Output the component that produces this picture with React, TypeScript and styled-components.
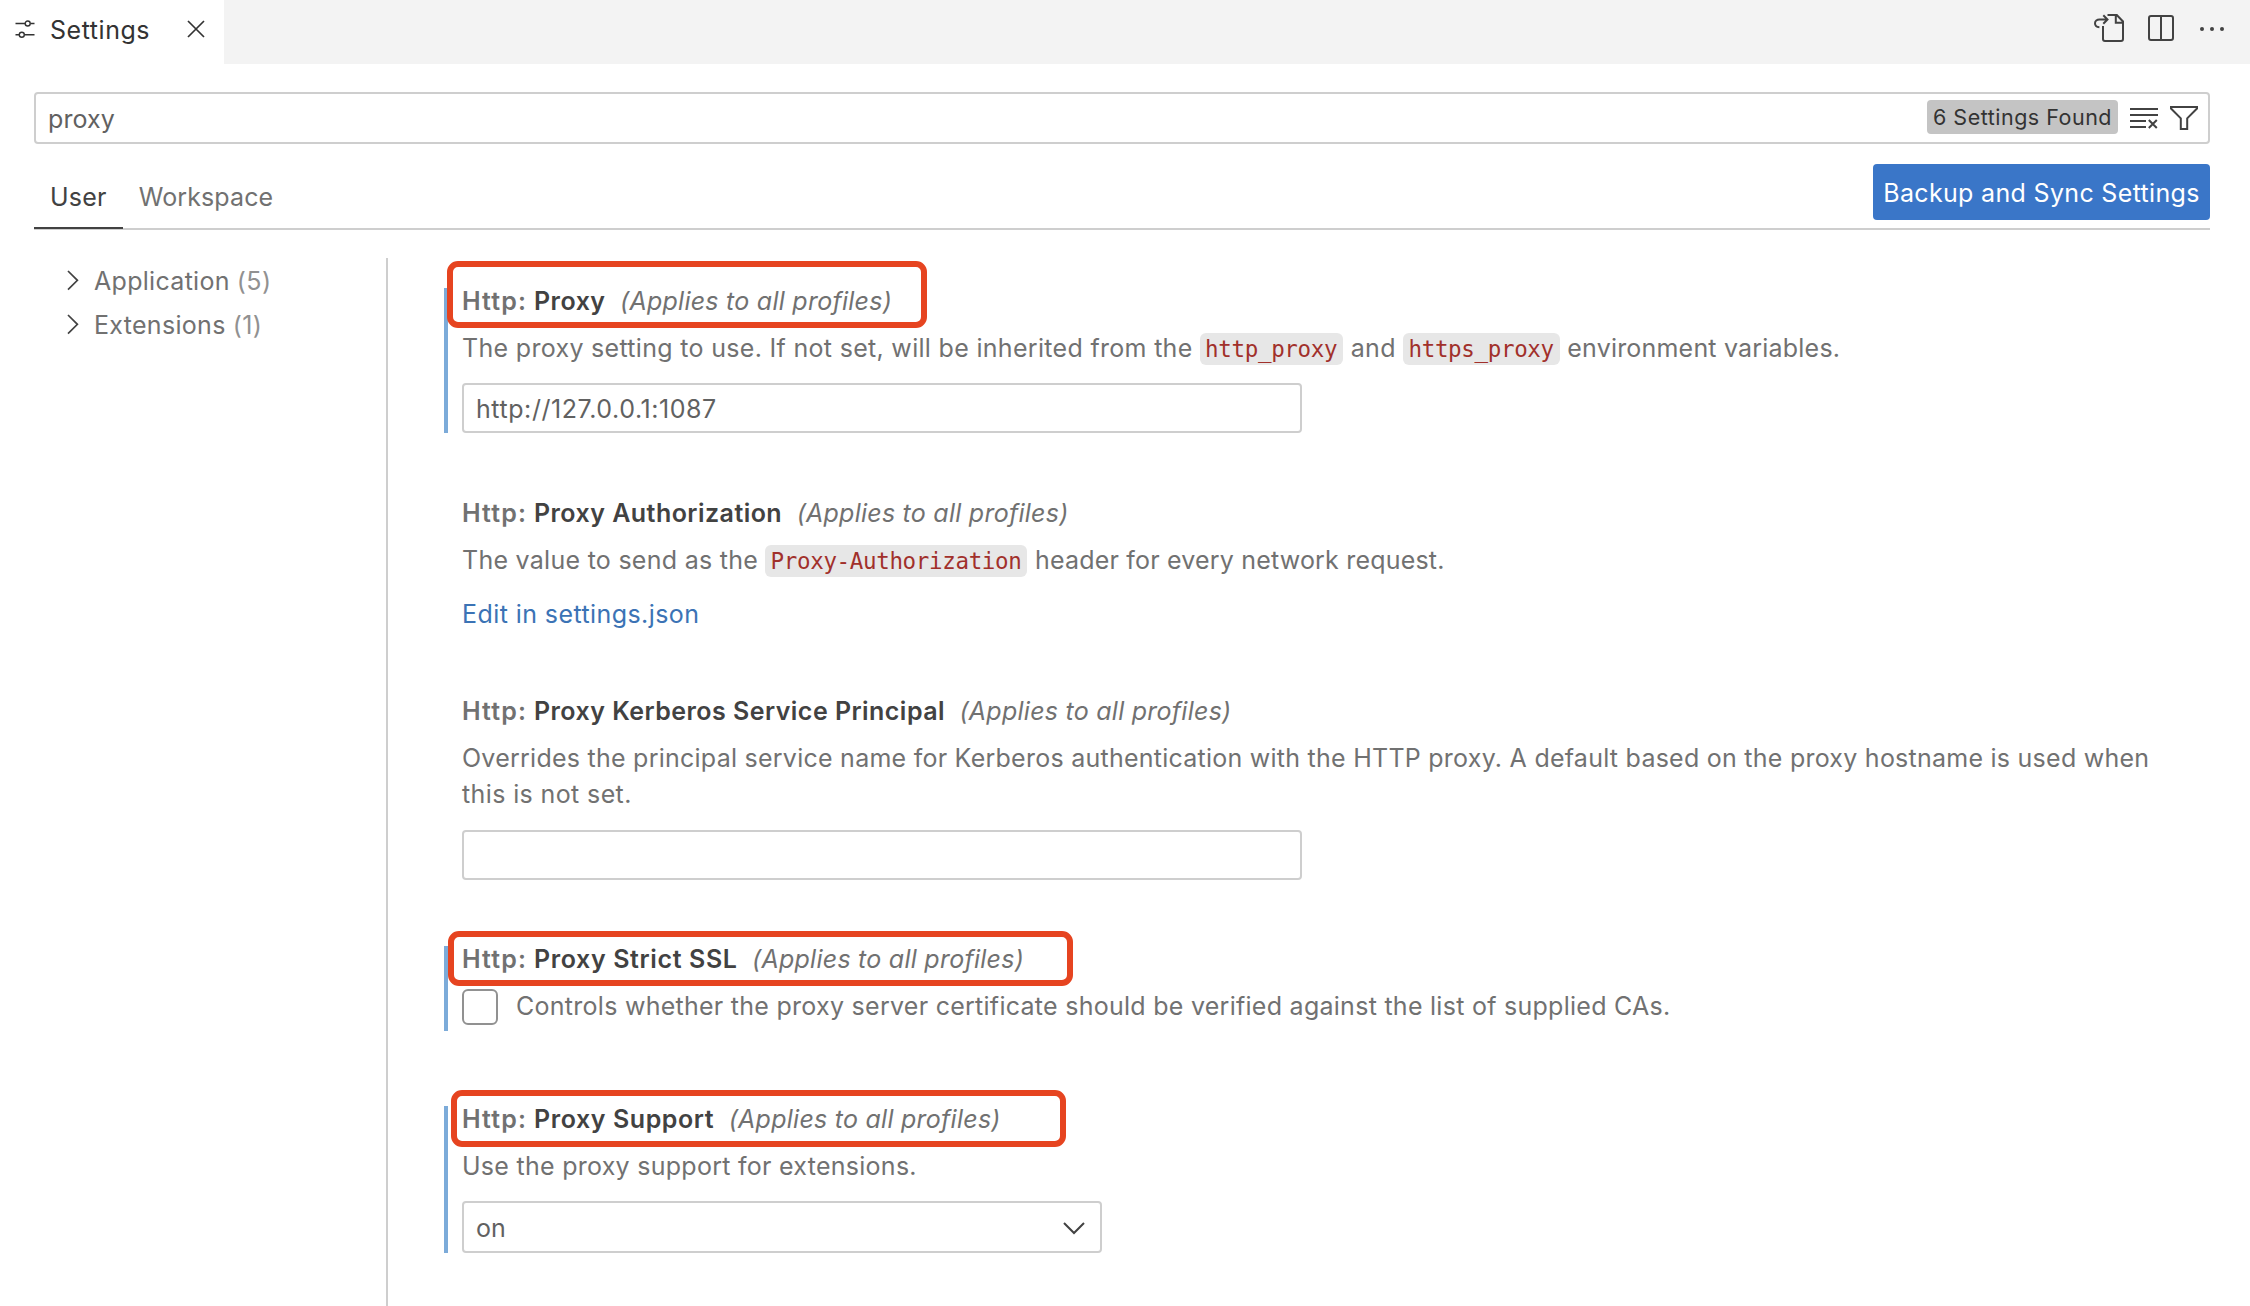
import React from "react";
import styled, { createGlobalStyle } from "styled-components";

const GlobalStyle = createGlobalStyle`
  *, *::before, *::after { box-sizing: border-box; }
  body {
    margin: 0;
    background: #fff;
    font-family: Inter, "Liberation Sans", sans-serif;
    font-size: 25px;
    color: #717171;
  }
`;

const Window = styled.div`
  width: 2250px;
  height: 1306px;
  display: flex;
  flex-direction: column;
  overflow: hidden;
  background: #fff;
`;

const TabBar = styled.header`
  height: 64px;
  flex: none;
  display: flex;
  justify-content: space-between;
  background: #f3f3f3;
`;

const EditorTab = styled.div`
  width: 224px;
  height: 64px;
  padding: 0 19px 6px 15px;
  display: flex;
  align-items: center;
  background: #fff;
  color: #333;
`;

const TabLabel = styled.span`
  margin-left: 15px;
  padding-top: 2px;
  flex: 1;
  letter-spacing: 0.55px;
`;

const EditorActions = styled.div`
  display: flex;
  align-items: center;
  gap: 24px;
  padding: 0 25px 8px 0;

  svg:nth-child(2) {
    margin-right: 1px;
  }
`;

const Spaced = styled.span<{ $ls: number }>`
  letter-spacing: ${(p) => p.$ls}px;
  white-space: nowrap;
`;

const Header = styled.div`
  flex: none;
  padding: 28px 40px 0 34px;
`;

const SearchBox = styled.div`
  height: 52px;
  border: 2px solid #cecece;
  border-radius: 4px;
  display: flex;
  align-items: center;
  gap: 12px;
  padding: 0 10px 0 12px;
  color: #616161;
`;

const SearchText = styled.span`
  flex: 1;
  padding-top: 2px;
  letter-spacing: 0.1px;
`;

const Badge = styled.span`
  width: 191px;
  height: 34px;
  margin-bottom: 2px;
  border-radius: 4px;
  background: #c4c4c4;
  color: #333;
  font-size: 21.5px;
  line-height: 34px;
  letter-spacing: 0.5px;
  text-align: center;
`;

const ScopeBar = styled.div`
  height: 86px;
  display: flex;
  justify-content: space-between;
  border-bottom: 2px solid #cecece;
`;

const ScopeTabs = styled.nav`
  display: flex;
`;

const ScopeTab = styled.div<{ $active?: boolean }>`
  height: 85px;
  padding: 37px 16px 0;
  line-height: 32px;
  letter-spacing: ${(p) => (p.$active ? 0.25 : 0.1)}px;
  color: ${(p) => (p.$active ? "#424242" : "#717171")};
  border-bottom: ${(p) => (p.$active ? "2px solid #424242" : "none")};
`;

const SyncButton = styled.button`
  width: 337px;
  height: 56px;
  margin-top: 20px;
  padding: 2px 0 0;
  border: 0;
  border-radius: 4px;
  background: #3a76c8;
  color: #fff;
  font: inherit;
  letter-spacing: 0.33px;
`;

const Body = styled.div`
  flex: 1;
  display: flex;
  padding-top: 28px;
  min-height: 0;
`;

const Tree = styled.aside`
  width: 388px;
  flex: none;
  border-right: 2px solid #cecece;
  padding: 1px 0 0 62px;
`;

const TreeRow = styled.div`
  height: 44px;
  display: flex;
  align-items: center;
  letter-spacing: 0.3px;
`;

const TreeLabel = styled.span`
  margin: 0 7px 0 10px;
`;

const Count = styled.span`
  color: #919191;
  letter-spacing: 0.4px;
`;

const List = styled.main`
  flex: 1;
  padding: 30px 0 0 56px;
`;

const Setting = styled.section<{ $height: number; $gap?: number; $modified?: boolean }>`
  height: ${(p) => p.$height}px;
  border-left: 4px solid ${(p) => (p.$modified ? "#7cabd9" : "transparent")};
  padding-left: 14px;
  margin-bottom: ${(p) => p.$gap ?? 67}px;
`;

const TitleRow = styled.div`
  position: relative;
  height: 25px;
  line-height: 27px;
  margin-bottom: 17px;
  white-space: nowrap;
`;

const Category = styled.span`
  font-weight: 600;
  color: #717171;
  letter-spacing: 1.1px;
`;

const Name = styled.span<{ $ls: number }>`
  font-weight: 600;
  color: #424242;
  margin-left: 7px;
  letter-spacing: ${(p) => p.$ls}px;
`;

const Scope = styled.span`
  font-style: italic;
  margin-left: 14.5px;
  letter-spacing: 0.25px;
`;

const Highlight = styled.div<{ $x: number; $y: number; $w: number; $h: number }>`
  position: absolute;
  left: ${(p) => p.$x}px;
  top: ${(p) => p.$y}px;
  width: ${(p) => p.$w}px;
  height: ${(p) => p.$h}px;
  border: 6px solid #e64420;
  border-radius: 11px;
`;

const Description = styled.div`
  line-height: 36px;
`;

const Line = styled.div`
  height: 36px;
  display: flex;
  align-items: center;
  white-space: nowrap;
`;

const Code = styled.code`
  margin: 2px 7.5px 0 7px;
  padding: 0 6px 0 5.5px;
  height: 32px;
  line-height: 33px;
  border-radius: 6px;
  background: #e7e7e7;
  color: #a1302b;
  font-family: "DejaVu Sans Mono", "Liberation Mono", monospace;
  font-size: 22.5px;
  letter-spacing: -0.34px;
`;

const Field = styled.div<{ $width: number; $height: number; $top?: number }>`
  width: ${(p) => p.$width}px;
  height: ${(p) => p.$height}px;
  margin-top: ${(p) => p.$top ?? 17}px;
  padding: 1px 15px 0 12px;
  border: 2px solid #cecece;
  border-radius: 4px;
  display: flex;
  align-items: center;
  justify-content: space-between;
  color: #616161;
`;

const JsonLink = styled.a`
  display: block;
  margin-top: 18px;
  line-height: 36px;
  letter-spacing: 0.42px;
  color: #3b73b5;
`;

const CheckRow = styled.div`
  display: flex;
  align-items: center;
  gap: 18px;
  height: 36px;
`;

const Checkbox = styled.span`
  width: 36px;
  height: 36px;
  margin-top: 2px;
  border: 2px solid #919191;
  border-radius: 6px;
`;

const SlidersIcon = () => (
  <svg width="20" height="18" viewBox="0 0 20 18" fill="none" stroke="#333" strokeWidth="1.4">
    <path d="M0.5 3.5H10M15.5 3.5H19.5M0.5 14.7H4M9.5 14.7H19.5" />
    <circle cx="12.7" cy="3.5" r="2.5" />
    <circle cx="6.8" cy="14.7" r="2.5" />
  </svg>
);

const CloseIcon = () => (
  <svg width="18" height="18" viewBox="0 0 18 18" stroke="#333" strokeWidth="1.7">
    <path d="M1 1L17 17M17 1L1 17" />
  </svg>
);

const OpenFileIcon = () => (
  <svg width="31" height="30" viewBox="0 0 31 30" fill="none" stroke="#424242" strokeWidth="2">
    <path d="M10 13V26Q10 28 12 28H28Q30 28 30 26V8.5L23.8 2H14.5M22.8 2V9.7H30" />
    <path d="M6.4 14.2C3.5 14 2 12.2 2 10.2C2 8 4 6.5 6.5 6.5H14.3M10.3 2.2L14.5 6.5L10.3 10.8" />
  </svg>
);

const SplitIcon = () => (
  <svg width="26" height="26" viewBox="0 0 26 26" fill="none" stroke="#424242" strokeWidth="2">
    <rect x="1" y="1" width="24" height="24" rx="2" />
    <path d="M13 1V25" />
  </svg>
);

const MoreIcon = () => (
  <svg width="26" height="8" viewBox="0 0 26 8" fill="#424242">
    <circle cx="3" cy="5" r="2" />
    <circle cx="13" cy="5" r="2" />
    <circle cx="23" cy="5" r="2" />
  </svg>
);

const ClearIcon = () => (
  <svg width="28" height="22" viewBox="0 0 28 22" fill="none" stroke="#424242" strokeWidth="2">
    <path d="M0 2H28M0 8H28M0 14H16M0 20H16" />
    <path d="M18.8 13L26.8 21M26.8 13L18.8 21" />
  </svg>
);

const FilterIcon = () => (
  <svg width="28" height="24" viewBox="0 0 28 24" fill="none" stroke="#424242" strokeWidth="2">
    <path d="M1 1H27V2.5L17.2 12.4V23H10.8V12.4L1 2.5Z" />
  </svg>
);

const ChevronRight = () => (
  <svg width="22" height="22" viewBox="0 0 22 22" fill="none" stroke="#424242" strokeWidth="1.7">
    <path d="M6 1L15.4 10.3L6 19.6" />
  </svg>
);

const ChevronDown = () => (
  <svg width="22" height="14" viewBox="0 0 22 14" fill="none" stroke="#424242" strokeWidth="2">
    <path d="M1 2L11 12L21 2" />
  </svg>
);

interface TitleProps {
  name: string;
  spacing: number;
  box?: [number, number, number, number];
}

const Title = ({ name, spacing, box }: TitleProps) => (
  <TitleRow>
    <Category>Http:</Category>
    <Name $ls={spacing}>{name}</Name>
    <Scope>(Applies to all profiles)</Scope>
    {box && <Highlight $x={box[0]} $y={box[1]} $w={box[2]} $h={box[3]} />}
  </TitleRow>
);

export default function App() {
  return (
    <Window>
      <GlobalStyle />
      <TabBar>
        <EditorTab>
          <SlidersIcon />
          <TabLabel>Settings</TabLabel>
          <CloseIcon />
        </EditorTab>
        <EditorActions>
          <OpenFileIcon />
          <SplitIcon />
          <MoreIcon />
        </EditorActions>
      </TabBar>
      <Header>
        <SearchBox>
          <SearchText>proxy</SearchText>
          <Badge>6 Settings Found</Badge>
          <ClearIcon />
          <FilterIcon />
        </SearchBox>
        <ScopeBar>
          <ScopeTabs>
            <ScopeTab $active>User</ScopeTab>
            <ScopeTab>Workspace</ScopeTab>
          </ScopeTabs>
          <SyncButton>Backup and Sync Settings</SyncButton>
        </ScopeBar>
      </Header>
      <Body>
        <Tree>
          <TreeRow>
            <ChevronRight />
            <TreeLabel>Application</TreeLabel>
            <Count>(5)</Count>
          </TreeRow>
          <TreeRow>
            <ChevronRight />
            <TreeLabel>Extensions</TreeLabel>
            <Count>(1)</Count>
          </TreeRow>
        </Tree>
        <List>
          <Setting $height={145} $modified>
            <Title name="Proxy" spacing={0.5} box={[-15, -27, 480, 67]} />
            <Line>
              <Spaced $ls={0.31}>The proxy setting to use. If not set, will be inherited from the</Spaced>
              <Code>http_proxy</Code>
              <Spaced $ls={0.4}>and</Spaced>
              <Code>https_proxy</Code>
              <Spaced $ls={0.2}>environment variables.</Spaced>
            </Line>
            <Field $width={840} $height={50}>
              <Spaced $ls={0.57}>http://127.0.0.1:1087</Spaced>
            </Field>
          </Setting>
          <Setting $height={131}>
            <Title name="Proxy Authorization" spacing={0.46} />
            <Line>
              <Spaced $ls={0.27}>The value to send as the</Spaced>
              <Code>Proxy-Authorization</Code>
              <Spaced $ls={0.19}>header for every network request.</Spaced>
            </Line>
            <JsonLink>Edit in settings.json</JsonLink>
          </Setting>
          <Setting $height={181}>
            <Title name="Proxy Kerberos Service Principal" spacing={0.46} />
            <Description>
              <Spaced $ls={0.25}>
                Overrides the principal service name for Kerberos authentication with the HTTP proxy. A default based on
                the proxy hostname is used when
                <br />
              </Spaced>
              <Spaced $ls={0.38}>this is not set.</Spaced>
            </Description>
            <Field $width={840} $height={50} $top={18} />
          </Setting>
          <Setting $height={85} $gap={75} $modified>
            <Title name="Proxy Strict SSL" spacing={0.63} box={[-14, -15, 625, 55]} />
            <CheckRow>
              <Checkbox />
              <Spaced $ls={0.27}>
                Controls whether the proxy server certificate should be verified against the list of supplied CAs.
              </Spaced>
            </CheckRow>
          </Setting>
          <Setting $height={147} $modified>
            <Title name="Proxy Support" spacing={0.59} box={[-11, -16, 615, 57]} />
            <Line>
              <Spaced $ls={0.27}>Use the proxy support for extensions.</Spaced>
            </Line>
            <Field $width={640} $height={52}>
              on
              <ChevronDown />
            </Field>
          </Setting>
        </List>
      </Body>
    </Window>
  );
}
